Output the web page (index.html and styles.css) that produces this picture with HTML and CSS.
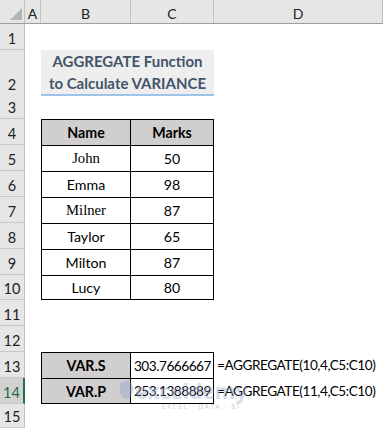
FILE: index.html
```html
<!DOCTYPE html>
<html>
<head>
<meta charset="utf-8">
<link rel="stylesheet" href="styles.css">
</head>
<body>
<div class="sheet">
  <div class="row h24 hdr">
    <div class="corner"><span class="tri"></span></div>
    <div class="ch">A</div>
    <div class="ch">B</div>
    <div class="ch">C</div>
    <div class="ch">D</div>
  </div>
  <div class="row h26"><div class="rh">1</div><div></div><div></div><div></div><div></div></div>
  <div class="row h44"><div class="rh">2</div><div></div><div class="title"><span>AGGREGATE Function</span><span>to Calculate VARIANCE</span></div><div></div></div>
  <div class="row h25"><div class="rh">3</div><div></div><div></div><div></div><div></div></div>
  <div class="row h26"><div class="rh">4</div><div></div><div class="tc first th">Name</div><div class="tc th">Marks</div><div></div></div>
  <div class="row h26"><div class="rh">5</div><div></div><div class="tc first serif">John</div><div class="tc">50</div><div></div></div>
  <div class="row h26"><div class="rh">6</div><div></div><div class="tc first">Emma</div><div class="tc">98</div><div></div></div>
  <div class="row h26"><div class="rh">7</div><div></div><div class="tc first serif">Milner</div><div class="tc">87</div><div></div></div>
  <div class="row h26"><div class="rh">8</div><div></div><div class="tc first">Taylor</div><div class="tc">65</div><div></div></div>
  <div class="row h26"><div class="rh">9</div><div></div><div class="tc first">Milton</div><div class="tc">87</div><div></div></div>
  <div class="row h25"><div class="rh">10</div><div></div><div class="tc first bot">Lucy</div><div class="tc bot">80</div><div></div></div>
  <div class="row h26"><div class="rh">11</div><div></div><div></div><div></div><div></div></div>
  <div class="row h26"><div class="rh">12</div><div></div><div></div><div></div><div></div></div>
  <div class="row h26"><div class="rh">13</div><div></div><div class="tc first th">VAR.S</div><div class="tc num">303.7666667</div><div class="formula">=AGGREGATE(10,4,C5:C10)</div></div>
  <div class="row h26"><div class="rh active">14</div><div></div><div class="tc first th bot">VAR.P</div><div class="tc num bot">253.1388889</div><div class="formula">=AGGREGATE(11,4,C5:C10)</div></div>
  <div class="row h24"><div class="rh">15</div><div></div><div></div><div></div><div></div></div>
</div>
<svg class="watermark" width="140" height="38" viewBox="0 0 140 38">
  <path d="M2 7 L12 4 L16 13 L12 22 L6 23 L2 17 Z" fill="#8fa3cc"/>
  <text x="17" y="23" class="wm-big">exceldemy</text>
  <text x="44" y="33" class="wm-small">EXCEL · DATA · BI</text>
</svg>
</body>
</html>
```
FILE: styles.css
```css
* { box-sizing: border-box; }
html, body { margin: 0; padding: 0; }
body {
  width: 383px;
  height: 428px;
  overflow: hidden;
  position: relative;
  background: #ffffff;
  font-family: Lato, "Liberation Sans", sans-serif;
  font-size: 14.2px;
  color: #000000;
}
.sheet { display: flex; flex-direction: column; }
.row {
  display: grid;
  grid-template-columns: 25px 16px 90px 83px 1fr;
}
.h24 { height: 24px; }
.h25 { height: 25px; }
.h26 { height: 26px; }
.h44 { height: 44px; }

.hdr { background: #e6e6e6; border-bottom: 1px solid #9e9e9e; }
.corner {
  display: flex;
  justify-content: flex-end;
  align-items: flex-end;
  padding: 0 2px 3px 0;
  border-right: 1px solid #c2c2c2;
}
.tri {
  width: 0;
  height: 0;
  border-left: 12px solid transparent;
  border-bottom: 12px solid #b5b5b5;
}
.ch {
  display: flex;
  align-items: center;
  justify-content: center;
  padding-top: 3px;
  border-right: 1px solid #c2c2c2;
  color: #222222;
  font-size: 14px;
}
.rh {
  display: flex;
  align-items: flex-end;
  justify-content: center;
  padding-bottom: 3px;
  background: #e6e6e6;
  border-right: 1px solid #c2c2c2;
  border-bottom: 1px solid #c8c8c8;
  color: #222222;
  font-size: 14.5px;
  line-height: 1;
}
.rh.active {
  background: #d2d2d2;
  color: #1e6b45;
  border-right: 2px solid #217346;
}
.title {
  grid-column: span 2;
  display: flex;
  flex-direction: column;
  justify-content: center;
  align-items: center;
  background: #eeeeee;
  border-bottom: 2px solid #9dc3e6;
  color: #44546a;
  font-weight: bold;
  font-size: 15px;
  line-height: 22px;
  white-space: nowrap;
}
.tc {
  display: flex;
  align-items: center;
  justify-content: center;
  border-top: 1px solid #000000;
  border-right: 1px solid #000000;
  white-space: nowrap;
}
.first { border-left: 1px solid #000000; }
.bot { border-bottom: 1px solid #000000; }
.th { background: #d0cece; font-weight: bold; }
.serif { font-family: "Liberation Serif", serif; font-size: 14.7px; }
.num {
  justify-content: flex-end;
  padding-right: 2px;
  font-size: 13.6px;
  letter-spacing: -0.45px;
}
.formula {
  display: flex;
  align-items: center;
  padding-left: 3px;
  white-space: nowrap;
  font-size: 13.6px;
  letter-spacing: -0.45px;
}
.watermark {
  position: absolute;
  left: 118px;
  top: 376px;
  opacity: 0.4;
  pointer-events: none;
}
.wm-big {
  font-family: "Open Sans", sans-serif;
  font-weight: bold;
  font-size: 21px;
  fill: #9aaccf;
}
.wm-small {
  font-family: "Open Sans", sans-serif;
  font-size: 6.5px;
  letter-spacing: 1.6px;
  fill: #8a8a8a;
}
```
